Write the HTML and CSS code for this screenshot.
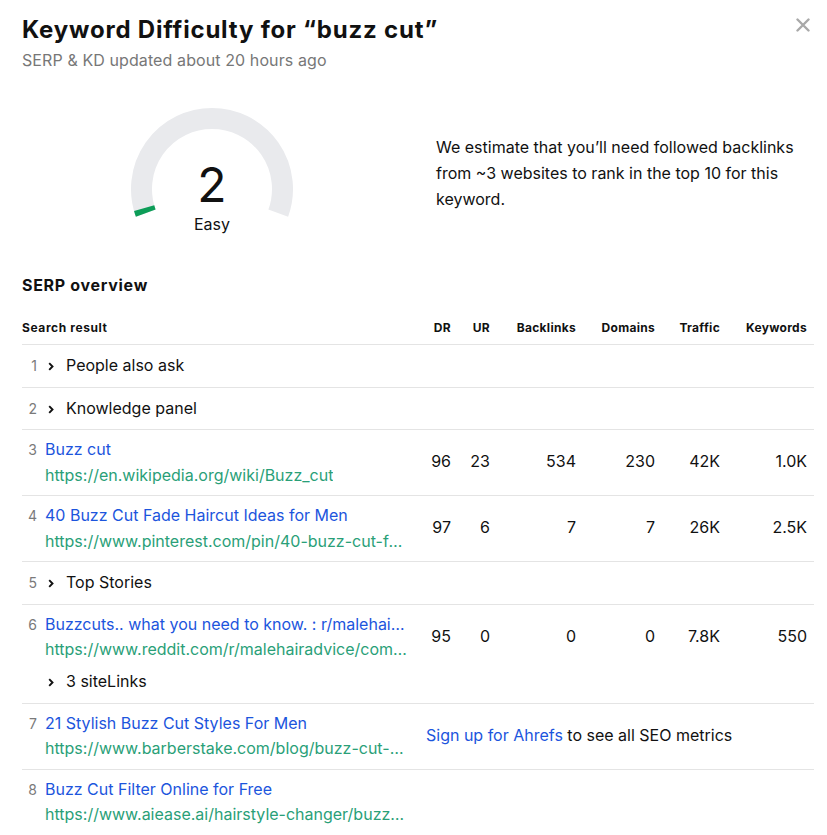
FILE: index.html
```html
<!DOCTYPE html>
<html lang="en">
<head>
<meta charset="utf-8">
<title>Keyword Difficulty</title>
<link rel="stylesheet" href="styles.css">
</head>
<body>
<div class="modal">
  <header class="head">
    <div class="head-text">
      <h1 class="title">Keyword Difficulty for “buzz cut”</h1>
      <p class="sub">SERP &amp; KD updated about 20 hours ago</p>
    </div>
    <button class="close" aria-label="Close">
      <svg width="14" height="14" viewBox="0 0 14 14"><path d="M1.5 1.5 L12.5 12.5 M12.5 1.5 L1.5 12.5" stroke="#a9a9a9" stroke-width="2.4" stroke-linecap="round"/></svg>
    </button>
  </header>

  <section class="kd">
    <div class="gauge-col">
      <div class="gauge">
        <svg class="gauge-svg" width="170" height="130" viewBox="0 0 170 130">
          <path d="M18.75 109.11 A70.5 70.5 0 1 1 151.25 109.11" fill="none" stroke="#e9eaed" stroke-width="21"/>
          <path d="M18.75 109.11 A70.5 70.5 0 1 1 151.25 109.11" fill="none" stroke="#0d9d58" stroke-width="21" pathLength="100" stroke-dasharray="2 200"/>
        </svg>
        <div class="gauge-text">
          <div class="kd-num">2</div>
          <div class="kd-label">Easy</div>
        </div>
      </div>
    </div>
    <p class="kd-desc">We estimate that you’ll need followed backlinks from ~3 websites to rank in the top 10 for this keyword.</p>
  </section>

  <h2 class="serp-title">SERP overview</h2>

  <table class="serp">
    <colgroup>
      <col class="c-res"><col class="c-dr"><col class="c-ur"><col class="c-bl"><col class="c-dom"><col class="c-tr"><col class="c-kw">
    </colgroup>
    <thead>
      <tr>
        <th class="th-res">Search result</th>
        <th>DR</th><th>UR</th><th>Backlinks</th><th>Domains</th><th>Traffic</th><th class="last">Keywords</th>
      </tr>
    </thead>
    <tbody>
      <tr class="single">
        <td class="res"><div class="line"><span class="num">1</span><span class="chev"><svg width="6" height="9" viewBox="0 0 6 9"><path d="M1.2 1.2 L4.5 4.5 L1.2 7.8" fill="none" stroke="#111" stroke-width="1.9"/></svg></span><span class="feat">People also ask</span></div></td>
        <td></td><td></td><td></td><td></td><td></td><td class="last"></td>
      </tr>
      <tr class="single">
        <td class="res"><div class="line"><span class="num">2</span><span class="chev"><svg width="6" height="9" viewBox="0 0 6 9"><path d="M1.2 1.2 L4.5 4.5 L1.2 7.8" fill="none" stroke="#111" stroke-width="1.9"/></svg></span><span class="feat">Knowledge panel</span></div></td>
        <td></td><td></td><td></td><td></td><td></td><td class="last"></td>
      </tr>
      <tr>
        <td class="res"><div class="line"><span class="num">3</span><div class="info"><a class="ttl" href="#">Buzz cut</a><span class="url">https://en.wikipedia.org/wiki/Buzz_cut</span></div></div></td>
        <td class="n">96</td><td class="n">23</td><td class="n">534</td><td class="n">230</td><td class="n">42K</td><td class="n last">1.0K</td>
      </tr>
      <tr>
        <td class="res"><div class="line"><span class="num">4</span><div class="info"><a class="ttl" href="#">40 Buzz Cut Fade Haircut Ideas for Men</a><span class="url">https://www.pinterest.com/pin/40-buzz-cut-fade-haircut-ideas-for-men</span></div></div></td>
        <td class="n">97</td><td class="n">6</td><td class="n">7</td><td class="n">7</td><td class="n">26K</td><td class="n last">2.5K</td>
      </tr>
      <tr class="single">
        <td class="res"><div class="line"><span class="num">5</span><span class="chev"><svg width="6" height="9" viewBox="0 0 6 9"><path d="M1.2 1.2 L4.5 4.5 L1.2 7.8" fill="none" stroke="#111" stroke-width="1.9"/></svg></span><span class="feat">Top Stories</span></div></td>
        <td></td><td></td><td></td><td></td><td></td><td class="last"></td>
      </tr>
      <tr>
        <td class="res"><div class="line"><span class="num">6</span><div class="info"><a class="ttl" href="#">Buzzcuts.. what you need to know. : r/malehairadvice</a><span class="url">https://www.reddit.com/r/malehairadvice/comments/buzzcuts_what_you_need_to_know</span>
          <div class="sitelinks"><span class="chev"><svg width="6" height="9" viewBox="0 0 6 9"><path d="M1.2 1.2 L4.5 4.5 L1.2 7.8" fill="none" stroke="#111" stroke-width="1.9"/></svg></span><span class="feat">3 siteLinks</span></div></div></div></td>
        <td class="n">95</td><td class="n">0</td><td class="n">0</td><td class="n">0</td><td class="n">7.8K</td><td class="n last">550</td>
      </tr>
      <tr>
        <td class="res"><div class="line"><span class="num">7</span><div class="info"><a class="ttl" href="#">21 Stylish Buzz Cut Styles For Men</a><span class="url">https://www.barberstake.com/blog/buzz-cut-styles-for-men</span></div></div></td>
        <td class="signup" colspan="6"><a href="#" class="su-link">Sign up for Ahrefs</a> to see all SEO metrics</td>
      </tr>
      <tr>
        <td class="res"><div class="line"><span class="num">8</span><div class="info"><a class="ttl" href="#">Buzz Cut Filter Online for Free</a><span class="url">https://www.aiease.ai/hairstyle-changer/buzz-cut-filter</span></div></div></td>
        <td colspan="6"></td>
      </tr>
    </tbody>
  </table>
</div>
</body>
</html>
```

FILE: styles.css
```css
* { box-sizing: border-box; }

body {
  margin: 0;
  background: #fff;
  color: #111;
  font-family: Inter, "Noto Sans", "Liberation Sans", sans-serif;
}

.modal {
  padding: 0 13px 0 22px;
}

.head {
  display: flex;
  justify-content: space-between;
  align-items: flex-start;
}

.title {
  margin: 0;
  padding-top: 14px;
  font-size: 24px;
  line-height: 32px;
  font-weight: 700;
  letter-spacing: 0.8px;
  color: #111;
}

.sub {
  margin: 3px 0 0;
  font-size: 16px;
  line-height: 22px;
  letter-spacing: 0.1px;
  color: #777;
}

.close {
  margin: 18px 4px 0 0;
  padding: 0;
  border: 0;
  background: none;
  width: 14px;
  height: 14px;
  cursor: pointer;
}
.close svg { display: block; }

.kd {
  display: flex;
  margin-top: 33px;
}

.gauge-col {
  width: 380px;
  display: flex;
  justify-content: center;
}

.gauge {
  display: grid;
  width: 170px;
  height: 130px;
}
.gauge-svg, .gauge-text { grid-area: 1 / 1; }
.gauge-svg { display: block; }

.gauge-text {
  padding-top: 55px;
  text-align: center;
}
.kd-num {
  font-size: 48px;
  line-height: 52px;
  font-weight: 400;
}
.kd-label {
  margin-top: 3px;
  font-size: 16px;
  line-height: 20px;
}

.kd-desc {
  margin: 30px 0 0 34px;
  width: 370px;
  font-size: 16px;
  line-height: 26px;
}

.serp-title {
  margin: 40px 0 16px;
  font-size: 16px;
  line-height: 22px;
  font-weight: 700;
  letter-spacing: 0.7px;
}

.serp {
  width: 792px;
  border-collapse: collapse;
  table-layout: fixed;
}
.c-res { width: 398px; }
.c-dr { width: 31px; }
.c-ur { width: 39px; }
.c-bl { width: 86px; }
.c-dom { width: 79px; }
.c-tr { width: 65px; }
.c-kw { width: 94px; }

.serp th {
  padding: 8px 0;
  font-size: 12px;
  line-height: 16px;
  font-weight: 700;
  letter-spacing: 0.3px;
  text-align: right;
  border-bottom: 1px solid #e4e4e4;
  white-space: nowrap;
}
.serp th.th-res { text-align: left; letter-spacing: 0.6px; }
.serp .last { padding-right: 7px; }

.serp td {
  border-bottom: 1px solid #e4e4e4;
  vertical-align: top;
  padding: 9px 0 10.5px;
  font-size: 16px;
}

.serp td.n {
  text-align: right;
  padding-top: 20px;
  line-height: 22px;
}

.line {
  display: flex;
  align-items: baseline;
}

.num {
  flex: none;
  width: 15px;
  margin-right: 8px;
  text-align: right;
  font-size: 14px;
  color: #7a7a7a;
}

.chev {
  flex: none;
  margin-left: 3px;
  width: 18px;
}
.chev svg { display: inline-block; vertical-align: 0px; }

.feat {
  font-size: 16px;
  line-height: 22px;
  color: #111;
}

.info {
  min-width: 0;
  max-width: 365px;
  display: flex;
  flex-direction: column;
}

.ttl, .url {
  display: block;
  white-space: nowrap;
  overflow: hidden;
  text-overflow: ellipsis;
  font-size: 16px;
  line-height: 20px;
}
.ttl {
  color: #1c55dd;
  text-decoration: none;
}
.url {
  margin-top: 5.5px;
  color: #2a9f78;
}

.sitelinks {
  margin-top: 11px;
  display: flex;
  align-items: baseline;
}

.serp td.signup {
  vertical-align: middle;
  padding-left: 6px;
  line-height: 22px;
  color: #111;
}
.su-link {
  color: #1c55dd;
  text-decoration: none;
}
```
